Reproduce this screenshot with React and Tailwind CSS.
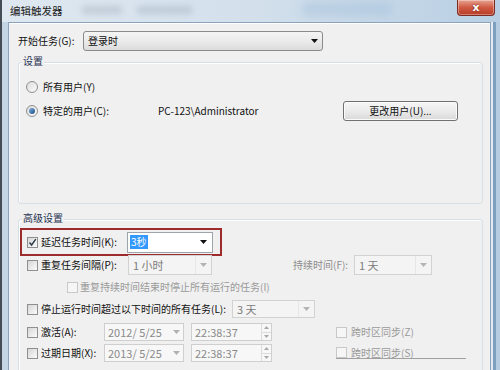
import React from 'react';

const Arrow = ({ color = '#111' }) => (
  <svg width="7" height="4" viewBox="0 0 7 4" className="shrink-0">
    <path d="M0 0 H7 L3.5 4 Z" fill={color} />
  </svg>
);

const Checkbox = ({ checked, disabled }) => (
  <span
    className={`w-[11px] h-[11px] shrink-0 flex items-center justify-center border ${
      disabled
        ? 'border-[#c8c8c8] bg-[#f6f6f6]'
        : 'border-[#8e8f8f] bg-gradient-to-br from-[#d6d6d6] to-[#fbfbfb]'
    }`}
  >
    {checked && (
      <svg width="9" height="9" viewBox="0 0 9 9">
        <path d="M1.5 4.5 L3.6 7 L7.8 1.2" stroke="#2a3a4a" strokeWidth="1.4" fill="none" />
      </svg>
    )}
  </span>
);

const Radio = ({ checked }) => (
  <span className="w-[12px] h-[12px] shrink-0 rounded-full border border-[#8e8f8f] bg-gradient-to-br from-[#dcdcdc] to-[#fcfcfc] flex items-center justify-center">
    {checked && (
      <span className="w-[6px] h-[6px] rounded-full bg-gradient-to-br from-[#7fb0dc] to-[#1c4f86]" />
    )}
  </span>
);

const DisabledCombo = ({ text, w }) => (
  <div className={`${w} h-[20px] flex items-center border border-[#d2d2d2] bg-[#f4f4f4] text-[#7c7c7c]`}>
    <span className="flex-1 pl-[4px] text-[11px]">{text}</span>
    <span className="w-[16px] h-full flex items-center justify-center border-l border-[#e6e6e6]">
      <Arrow color="#b4b4b4" />
    </span>
  </div>
);

const DateBox = ({ text }) => (
  <div className="w-[80px] h-[18px] flex items-center border border-[#cfcfcf] bg-[#f7f7f7] text-[#8a8a8a]">
    <span className="flex-1 pl-[3px] text-[11px]">{text}</span>
    <span className="w-[14px] flex items-center justify-center">
      <Arrow color="#b0b0b0" />
    </span>
  </div>
);

const TimeBox = ({ text }) => (
  <div className="w-[81px] h-[18px] flex items-center border border-[#cfcfcf] bg-[#f7f7f7] text-[#8a8a8a]">
    <span className="flex-1 pl-[3px] text-[11px]">{text}</span>
    <span className="w-[10px] h-full flex flex-col border-l border-[#dcdcdc]">
      <span className="flex-1 flex items-center justify-center border-b border-[#dcdcdc]">
        <svg width="5" height="3" viewBox="0 0 5 3"><path d="M0 3 H5 L2.5 0 Z" fill="#a8a8a8" /></svg>
      </span>
      <span className="flex-1 flex items-center justify-center">
        <svg width="5" height="3" viewBox="0 0 5 3"><path d="M0 0 H5 L2.5 3 Z" fill="#a8a8a8" /></svg>
      </span>
    </span>
  </div>
);

const Group = ({ title, h, mt, children }) => (
  <div className={`relative ${mt} ml-[9px] w-[465px] ${h} border border-[#d5dfe5] rounded-[3px] shadow-[inset_1px_1px_0_#ffffff]`}>
    <span className="absolute -top-[7px] left-[3px] px-[1px] bg-[#f0f0f0] text-[#1e3050]">{title}</span>
    {children}
  </div>
);

export default function App() {
  return (
    <div className="w-[500px] h-[370px] overflow-hidden flex bg-[#c9d9e8] font-['Noto_Sans_CJK_SC',sans-serif] text-[10px] leading-none text-[#111]">
      <div className="w-[2px] bg-[#464c55]" />
      <div className="flex-1 flex flex-col">
        {/* title bar */}
        <div className="relative h-[22px] shrink-0 flex items-center pl-[8px] bg-gradient-to-r from-[#dfe8f0] via-[#d3e0ec] to-[#b8cfe3] overflow-hidden">
          <span className="absolute left-[80px] top-[6px] w-[40px] h-[8px] bg-[#9aa7b4] opacity-40 blur-[3px]" />
          <span className="absolute left-[135px] top-[6px] w-[55px] h-[8px] bg-[#9aa7b4] opacity-40 blur-[3px]" />
          <span className="absolute left-[300px] top-[2px] w-[90px] h-[14px] bg-[#a9c3dc] opacity-50 blur-[4px]" />
          <span className="relative text-[#1a1a1a] text-[10.5px]">编辑触发器</span>
          <div className="absolute top-0 right-[5px] w-[38px] h-[16px] rounded-b-[4px] border border-t-0 border-[#7d2a20] bg-gradient-to-b from-[#e7a190] via-[#cf5a43] to-[#b93a26] flex items-center justify-center shadow-[inset_0_0_0_1px_rgba(255,255,255,0.35)]">
            <span className="text-white font-bold text-[11px] font-['DejaVu_Sans',sans-serif] [text-shadow:0_0_2px_#5a1a10]">x</span>
          </div>
        </div>

        <div className="flex flex-1">
          <div className="w-[6px] bg-[#c4d5e6]" />

          {/* dialog body */}
          <div className="w-[483px] border border-b-0 border-[#8aa2ba] bg-[#f0f0f0] shadow-[inset_0_1px_0_#ffffff] flex flex-col">
            <div className="mt-[8px] ml-[9px] h-[20px] flex items-center">
              <span className="w-[65px]">开始任务(G):</span>
              <div className="w-[240px] h-[20px] flex items-center border border-[#8a8a8a] rounded-[3px] bg-gradient-to-b from-[#f4f4f4] via-[#ebebeb] to-[#dcdcdc]">
                <span className="flex-1 pl-[4px]">登录时</span>
                <span className="pr-[4px]"><Arrow /></span>
              </div>
            </div>

            <Group title="设置" h="h-[142px]" mt="mt-[11px]">
              <div className="mt-[17px] ml-[7px] h-[14px] flex items-center gap-[5px]">
                <Radio />
                <span>所有用户(Y)</span>
              </div>
              <div className="mt-[7px] ml-[7px] h-[20px] flex items-center">
                <Radio checked />
                <span className="ml-[5px] w-[115px]">特定的用户(C):</span>
                <span className="w-[185px]">PC-123\Administrator</span>
                <button className="w-[115px] h-[20px] border border-[#707070] rounded-[3px] bg-gradient-to-b from-[#f6f6f6] via-[#ebebeb] to-[#d9d9d9] text-[10px] leading-none shadow-[inset_0_0_0_1px_#fbfbfb]">
                  更改用户(U)...
                </button>
              </div>
            </Group>

            <Group title="高级设置" h="h-[200px]" mt="mt-[15px]">
              {/* highlighted row */}
              <div className="mt-[8px] ml-[1px] w-[202px] h-[28px] border-2 border-[#9d2b2b] flex items-center pl-[5px]">
                <Checkbox checked />
                <span className="ml-[3px] w-[86px]">延迟任务时间(K):</span>
                <div className="w-[86px] h-[21px] flex items-center border border-[#9ea4ab] bg-white">
                  <span className="ml-[2px] px-[1px] py-[2px] bg-[#3399ff] text-white">3秒</span>
                  <span className="flex-1" />
                  <span className="pr-[5px]"><Arrow /></span>
                </div>
              </div>

              <div className="-mt-[1px] ml-[8px] h-[20px] flex items-center">
                <Checkbox />
                <span className="ml-[3px] w-[87px]">重复任务间隔(P):</span>
                <DisabledCombo text="1 小时" w="w-[84px]" />
                <span className="ml-[81px] w-[61px] text-[#8d8d8d]">持续时间(F):</span>
                <DisabledCombo text="1 天" w="w-[78px]" />
              </div>

              <div className="mt-[5px] ml-[48px] h-[14px] flex items-center">
                <Checkbox disabled />
                <span className="ml-[2px] text-[#9a9a9a]">重复持续时间结束时停止所有运行的任务(I)</span>
              </div>

              <div className="mt-[6px] ml-[8px] h-[18px] flex items-center">
                <Checkbox />
                <span className="ml-[3px] w-[191px]">停止运行时间超过以下时间的所有任务(L):</span>
                <DisabledCombo text="3 天" w="w-[83px] !h-[18px]" />
              </div>

              <div className="mt-[5px] ml-[8px] h-[18px] flex items-center">
                <Checkbox />
                <span className="ml-[3px] w-[63px]">激活(A):</span>
                <DateBox text="2012/ 5/25" />
                <span className="ml-[7px]"><TimeBox text="22:38:37" /></span>
                <span className="ml-[64px] flex items-center">
                  <Checkbox disabled />
                  <span className="ml-[4px] text-[#9a9a9a]">跨时区同步(Z)</span>
                </span>
              </div>

              <div className="mt-[3px] ml-[8px] h-[18px] flex items-center">
                <Checkbox />
                <span className="ml-[3px] w-[63px]">过期日期(X):</span>
                <DateBox text="2013/ 5/25" />
                <span className="ml-[7px]"><TimeBox text="22:38:37" /></span>
                <span className="ml-[64px] w-[130px] h-[12px] flex items-start border-b border-[#a0a0a0]">
                  <Checkbox disabled />
                  <span className="ml-[4px] mt-[1px] text-[#9a9a9a]">跨时区同步(S)</span>
                </span>
              </div>
            </Group>
          </div>

          <div className="flex-1 flex">
            <div className="w-[2px] bg-[#e2ebf3]" />
            <div className="w-[3px] bg-[#7f9fbf]" />
            <div className="flex-1 bg-[#b6cce0]" />
          </div>
        </div>
      </div>
    </div>
  );
}
